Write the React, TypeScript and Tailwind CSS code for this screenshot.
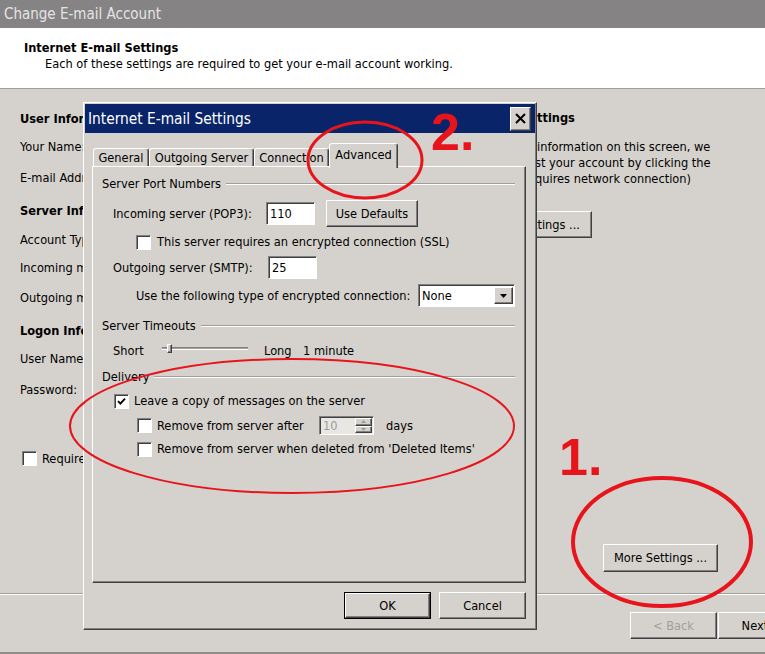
import React from 'react';

// classic 3D bevels
const raised =
  'bg-[#d5d2cd] border border-t-white border-l-white border-r-[#404040] border-b-[#404040] shadow-[inset_-1px_-1px_#808080]';
const sunken =
  'border border-t-[#808080] border-l-[#808080] border-r-white border-b-white shadow-[inset_1px_1px_#404040]';

const CheckBox: React.FC<{ checked?: boolean }> = ({ checked = false }) => (
  <span className={`${sunken} bg-white w-[15px] h-[15px] shrink-0 flex items-center justify-center`}>
    {checked && (
      <svg width="9" height="9" viewBox="0 0 9 9">
        <path d="M1 4.2 L3.4 6.6 L8 1.6" stroke="#000" strokeWidth="1.9" fill="none" />
      </svg>
    )}
  </span>
);

const Button: React.FC<{ children: React.ReactNode; className?: string }> = ({ children, className = '' }) => (
  <div className={`${raised} flex items-center justify-center ${className}`}>{children}</div>
);

const Group: React.FC<{ title: string; className?: string }> = ({ title, className = '' }) => (
  <div className={`flex items-center h-[16px] gap-[5px] ${className}`}>
    <span className="whitespace-nowrap">{title}</span>
    <span className="flex-1 h-[2px] border-t border-t-[#a09e9b] border-b border-b-white" />
  </div>
);

const leftRows = [
  { text: 'User Information', bold: true, mt: 'mt-0' },
  { text: 'Your Name:', bold: false, mt: 'mt-[8px]' },
  { text: 'E-mail Address:', bold: false, mt: 'mt-[11px]' },
  { text: 'Server Information', bold: true, mt: 'mt-[13px]' },
  { text: 'Account Type:', bold: false, mt: 'mt-[9px]' },
  { text: 'Incoming mail server:', bold: false, mt: 'mt-[8px]' },
  { text: 'Outgoing mail server (SMTP):', bold: false, mt: 'mt-[10px]' },
  { text: 'Logon Information', bold: true, mt: 'mt-[13px]' },
  { text: 'User Name:', bold: false, mt: 'mt-[8px]' },
  { text: 'Password:', bold: false, mt: 'mt-[11px]' },
];

// right column text: the part before the dialog edge is hidden behind the dialog
const rightLines = [
  { hidden: 'After filling out the', shown: 'information on this screen, we', gap: 'mr-[9px]' },
  { hidden: 'recommend you te', shown: 'st your account by clicking the', gap: 'mr-[7px]' },
  { hidden: 'button below. (Re', shown: 'quires network connection)', gap: 'mr-[7px]' },
];

const tabs = [
  { label: 'General', w: 'w-[56px]' },
  { label: 'Outgoing Server', w: 'w-[105px]' },
  { label: 'Connection', w: 'w-[75px]' },
];

const App: React.FC = () => {
  return (
    <div className="relative w-[765px] h-[654px] overflow-hidden bg-[#d5d2cd] text-black text-[12.7px] leading-[16px] font-['DejaVu_Sans_Condensed','DejaVu_Sans',sans-serif]">
      {/* Window title */}
      <div className="h-[28px] bg-[#858384] text-[#e4e4e4] text-[15px] flex items-center pl-[4px]">
        Change E-mail Account
      </div>

      {/* Header */}
      <div className="h-[61px] bg-white border-b border-b-[#a09e9b] pl-[24px] pt-[12px]">
        <div className="font-bold">Internet E-mail Settings</div>
        <div className="pl-[21px]">Each of these settings are required to get your e-mail account working.</div>
      </div>

      {/* Body */}
      <div className="h-[504px] flex">
        <div className="w-[400px] shrink-0 pl-[20px] pt-[20px] flex flex-col">
          {leftRows.map((r) => (
            <div key={r.text} className={`h-[20px] flex items-center whitespace-nowrap ${r.mt} ${r.bold ? 'font-bold' : ''}`}>
              {r.text}
            </div>
          ))}
          <div className="mt-[51px] pl-[2px] flex items-center gap-[5px] h-[15px] whitespace-nowrap">
            <CheckBox />
            <span>Require logon using Secure Password Authentication (SPA)</span>
          </div>
        </div>

        <div className="w-[365px] shrink-0 pt-[21px] flex flex-col">
          <div className="flex h-[16px] font-bold whitespace-nowrap">
            <span className="w-[128px] mr-[9px] shrink-0 text-right overflow-hidden">Test Account Se</span>
            <span>ttings</span>
          </div>
          <div className="mt-[13px] flex flex-col whitespace-nowrap">
            {rightLines.map((l) => (
              <div key={l.shown} className="flex h-[16px]">
                <span className={`w-[128px] shrink-0 text-right overflow-hidden ${l.gap}`}>{l.hidden}</span>
                <span>{l.shown}</span>
              </div>
            ))}
          </div>
          <Button className="mt-[24px] w-[192px] h-[27px] !justify-end pr-[11px] whitespace-nowrap">
            Test Account Settings ...
          </Button>
          <Button className="mt-[306px] ml-[203px] w-[115px] h-[28px]">More Settings ...</Button>
        </div>
      </div>

      {/* Separator + footer */}
      <div className="h-[2px] border-t border-t-[#a09e9b] border-b border-b-white" />
      <div className="h-[57px] pt-[17px] pl-[630px] flex gap-[1px]">
        <Button className="w-[87px] h-[27px] shrink-0 text-[#a19f9c]">&lt; Back</Button>
        <Button className="w-[87px] h-[27px] shrink-0">Next &gt;</Button>
      </div>
      <div className="h-[2px] bg-[#8f8d8a]" />

      {/* Dialog */}
      <div className="absolute left-[83px] top-[102px] w-[454px] h-[528px] bg-[#d5d2cd] border border-t-white border-l-white border-r-[#404040] border-b-[#404040] shadow-[inset_-1px_-1px_#808080] p-[1px] flex flex-col">
        <div className="h-[29px] bg-[#0a246a] flex items-center justify-between pl-[3px] pr-[4px]">
          <span className="text-white text-[15.3px]">Internet E-mail Settings</span>
          <div className={`${raised} w-[21px] h-[24px] flex items-center justify-center`}>
            <svg width="11" height="11" viewBox="0 0 11 11">
              <path d="M1 1 L10 10 M10 1 L1 10" stroke="#000" strokeWidth="2" />
            </svg>
          </div>
        </div>

        <div className="pl-[7px] pr-[9px] pt-[10px] flex flex-col">
          {/* Tabs */}
          <div className="h-[23px] flex items-end pl-[1px]">
            {tabs.map((t) => (
              <div
                key={t.label}
                className={`${t.w} h-[18px] shrink-0 flex items-center justify-center rounded-t-[3px] border-t border-l border-t-white border-l-white border-r border-r-[#404040] shadow-[inset_-1px_0_#808080] whitespace-nowrap`}
              >
                {t.label}
              </div>
            ))}
            <div className="relative z-10 w-[69px] h-[25px] mb-[-2px] shrink-0 bg-[#d5d2cd] flex items-start justify-center pt-[3px] rounded-t-[3px] border-t border-l border-t-white border-l-white border-r border-r-[#404040] shadow-[inset_-1px_0_#808080]">
              Advanced
            </div>
          </div>

          {/* Tab panel */}
          <div className={`${raised} h-[417px] pl-[9px] pr-[10px] pt-[9px] flex flex-col`}>
            <Group title="Server Port Numbers" />

            <div className="mt-[8px] h-[27px] pl-[11px] flex items-center">
              <span className="w-[153px] whitespace-nowrap">Incoming server (POP3):</span>
              <div className={`${sunken} bg-white w-[49px] h-[23px] pl-[3px] flex items-center`}>110</div>
              <Button className="ml-[11px] w-[92px] h-[27px]">Use Defaults</Button>
            </div>

            <div className="mt-[7px] h-[16px] pl-[34px] flex items-center gap-[6px] whitespace-nowrap">
              <CheckBox />
              <span>This server requires an encrypted connection (SSL)</span>
            </div>

            <div className="mt-[6px] h-[23px] pl-[11px] flex items-center">
              <span className="w-[155px] whitespace-nowrap">Outgoing server (SMTP):</span>
              <div className={`${sunken} bg-white w-[49px] h-[23px] pl-[3px] flex items-center`}>25</div>
            </div>

            <div className="mt-[5px] h-[23px] pl-[34px] flex items-center">
              <span className="w-[282px] whitespace-nowrap">Use the following type of encrypted connection:</span>
              <div className={`${sunken} bg-white w-[97px] h-[23px] pl-[3px] pr-[1px] flex items-center justify-between`}>
                <span>None</span>
                <div className={`${raised} w-[19px] h-[17px] flex items-center justify-center`}>
                  <svg width="7" height="4" viewBox="0 0 7 4">
                    <path d="M0 0 H7 L3.5 4 Z" fill="#000" />
                  </svg>
                </div>
              </div>
            </div>

            <Group title="Server Timeouts" className="mt-[11px]" />

            <div className="mt-[9px] h-[16px] pl-[11px] flex items-center whitespace-nowrap">
              <span className="w-[49px]">Short</span>
              <div className="relative w-[86px] h-[3px] mb-[5px] border-t border-t-[#808080] border-b border-b-white bg-[#a09e9b]">
                <div className={`${raised} absolute left-[5px] top-[-4px] w-[5px] h-[9px]`} />
              </div>
              <span className="ml-[16px] w-[39px]">Long</span>
              <span>1 minute</span>
            </div>

            <Group title="Delivery" className="mt-[10px]" />

            <div className="mt-[8px] h-[16px] pl-[12px] flex items-center gap-[5px] whitespace-nowrap">
              <CheckBox checked />
              <span>Leave a copy of messages on the server</span>
            </div>

            <div className="mt-[7px] h-[19px] pl-[35px] flex items-center whitespace-nowrap">
              <CheckBox />
              <span className="ml-[5px] w-[162px]">Remove from server after</span>
              <div className={`${sunken} bg-[#e9e7e3] w-[55px] h-[19px] pl-[3px] pr-[1px] flex items-center justify-between text-[#9d9b98]`}>
                <span>10</span>
                <div className="flex flex-col w-[17px] h-[15px]">
                  <div className={`${raised} flex-1 flex items-center justify-center`}>
                    <svg width="5" height="3" viewBox="0 0 5 3"><path d="M0 3 H5 L2.5 0 Z" fill="#9d9b98" /></svg>
                  </div>
                  <div className={`${raised} flex-1 flex items-center justify-center`}>
                    <svg width="5" height="3" viewBox="0 0 5 3"><path d="M0 0 H5 L2.5 3 Z" fill="#9d9b98" /></svg>
                  </div>
                </div>
              </div>
              <span className="ml-[12px]">days</span>
            </div>

            <div className="mt-[6px] h-[16px] pl-[35px] flex items-center gap-[5px] whitespace-nowrap">
              <CheckBox />
              <span>Remove from server when deleted from 'Deleted Items'</span>
            </div>
          </div>

          {/* OK / Cancel */}
          <div className="mt-[9px] flex justify-end gap-[8px]">
            <div className="border border-black">
              <Button className="w-[85px] h-[25px]">OK</Button>
            </div>
            <Button className="w-[87px] h-[27px]">Cancel</Button>
          </div>
        </div>
      </div>

      {/* Red annotations */}
      <svg className="absolute inset-0 pointer-events-none" width="765" height="654">
        <ellipse cx="365" cy="160" rx="57" ry="38" fill="none" stroke="#e8141c" strokeWidth="3" />
        <ellipse cx="292" cy="426" rx="222" ry="67" fill="none" stroke="#e8141c" strokeWidth="2" />
        <ellipse cx="662" cy="542" rx="89" ry="64" fill="none" stroke="#e8141c" strokeWidth="4" />
      </svg>
      <div className="absolute left-[431px] top-[106px] text-[52px] leading-none font-bold text-[#e8141c] font-['Liberation_Sans',sans-serif]">
        2.
      </div>
      <div className="absolute left-[559px] top-[431px] text-[52px] leading-none font-bold text-[#e8141c] font-['Liberation_Sans',sans-serif]">
        1.
      </div>
    </div>
  );
};

export default App;
